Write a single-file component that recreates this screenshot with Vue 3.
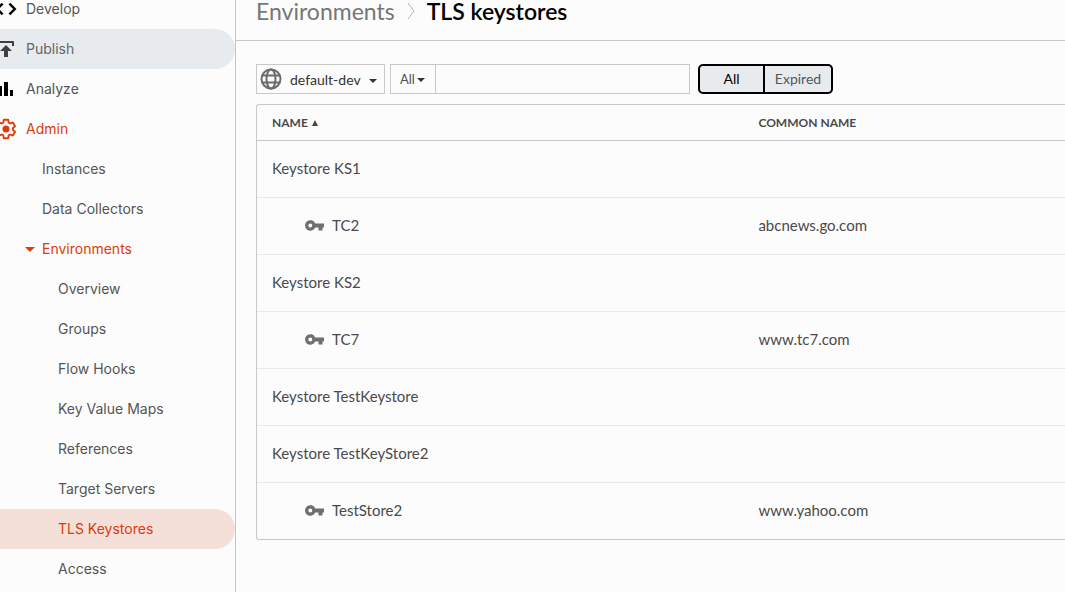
<script setup>
import { ref } from 'vue'

const sections = [
  { label: 'Develop', icon: 'code' },
  { label: 'Publish', icon: 'publish', state: 'hovered' },
  { label: 'Analyze', icon: 'chart' },
  { label: 'Admin', icon: 'gear', state: 'accent' },
  { label: 'Instances', level: 1 },
  { label: 'Data Collectors', level: 1 },
  { label: 'Environments', level: 1, state: 'accent', open: true },
  { label: 'Overview', level: 2 },
  { label: 'Groups', level: 2 },
  { label: 'Flow Hooks', level: 2 },
  { label: 'Key Value Maps', level: 2 },
  { label: 'References', level: 2 },
  { label: 'Target Servers', level: 2 },
  { label: 'TLS Keystores', level: 2, state: 'current' },
  { label: 'Access', level: 2 }
]

const rows = [
  { name: 'Keystore KS1' },
  { name: 'TC2', alias: true, common: 'abcnews.go.com' },
  { name: 'Keystore KS2' },
  { name: 'TC7', alias: true, common: 'www.tc7.com' },
  { name: 'Keystore TestKeystore' },
  { name: 'Keystore TestKeyStore2' },
  { name: 'TestStore2', alias: true, common: 'www.yahoo.com' }
]

const query = ref('')
const filter = ref('All')
</script>

<template>
  <div class="app">
    <nav class="sidebar" aria-label="Main">
      <ul class="menu">
        <li v-for="item in sections" :key="item.label">
          <a href="#" class="item" :class="[item.state, 'level-' + (item.level || 0)]">
            <svg v-if="item.icon" class="item-icon" viewBox="0 0 24 24" aria-hidden="true">
              <path v-if="item.icon === 'code'" d="M8.600 6.600 3.200 12l5.400 5.400M15.400 6.600l5.400 5.400-5.400 5.400" fill="none" stroke="#000" stroke-width="2.400" />
              <path v-else-if="item.icon === 'publish'" d="M4 9V5q0-1 1-1h14q1 0 1 1v4h-2V6H6v3zM12 8l6 6h-4v6h-4v-6H6z" fill="#3c4043" />
              <path v-else-if="item.icon === 'chart'" d="M4 9h4v10H4zM10 5h4v14h-4zM16 13h3v6h-3z" fill="#000" />
              <template v-else>
                <path d="M19.430 12.980c.04-.32.07-.64.07-.98s-.03-.66-.07-.98l2.110-1.650c.19-.15.24-.42.12-.64l-2-3.460c-.09-.16-.26-.25-.44-.25-.06 0-.12.01-.17.03l-2.490 1c-.52-.4-1.080-.73-1.690-.98l-.38-2.650C14.460 2.180 14.250 2 14 2h-4c-.25 0-.46.18-.49.42l-.38 2.650c-.61.25-1.170.59-1.690.98l-2.490-1c-.06-.02-.12-.03-.18-.03-.17 0-.34.09-.43.25l-2 3.460c-.13.22-.07.49.12.64l2.110 1.650c-.04.32-.07.65-.07.98s.03.66.07.98l-2.110 1.650c-.19.15-.24.42-.12.64l2 3.460c.09.16.26.25.44.25.06 0 .12-.01.17-.03l2.490-1c.52.4 1.080.73 1.690.98l.38 2.650c.03.24.24.42.49.42h4c.25 0 .46-.18.49-.42l.38-2.650c.61-.25 1.170-.59 1.690-.98l2.490 1c.06.02.12.03.18.03.17 0 .34-.09.43-.25l2-3.460c.12-.22.07-.49-.12-.64z" fill="none" stroke="#dd3b0a" stroke-width="2" transform="translate(.9 .9) scale(.925)" />
                <circle cx="12" cy="12" r="3.500" fill="#dd3b0a" />
              </template>
            </svg>
            <svg v-if="item.open" class="expander" viewBox="0 0 10 5" aria-hidden="true">
              <path d="M0 0h10L5 5z" fill="#dd3b0a" />
            </svg>
            <span class="label">{{ item.label }}</span>
          </a>
        </li>
      </ul>
    </nav>

    <main class="main">
      <header class="header">
        <a href="#" class="crumb">Environments</a>
        <svg class="chevron" viewBox="0 0 8 16" aria-hidden="true">
          <path d="M1 0l6 8-6 8" fill="none" stroke="#b5b5b5" stroke-width="1" />
        </svg>
        <h1 class="title">TLS keystores</h1>
      </header>

      <section class="content">
        <div class="toolbar">
          <div class="picker env">
            <svg class="globe" viewBox="0 0 22 22" aria-hidden="true">
              <g fill="none" stroke="#6b6b6b" stroke-width="2">
                <circle cx="11" cy="11" r="9.500" />
                <ellipse cx="11" cy="11" rx="4.500" ry="9.500" />
                <path d="M2 7.500h18M2 14.500h18" />
              </g>
            </svg>
            <select aria-label="Environment">
              <option>default-dev</option>
            </select>
            <svg class="caret" viewBox="0 0 8 4" aria-hidden="true"><path d="M0 0h8L4 4z" fill="#333" /></svg>
          </div>

          <div class="search">
            <div class="picker scope">
              <select aria-label="Search field">
                <option>All</option>
              </select>
              <svg class="caret" viewBox="0 0 8 4" aria-hidden="true"><path d="M0 0h8L4 4z" fill="#333" /></svg>
            </div>
            <input v-model="query" class="query" type="text" aria-label="Search keystores" />
          </div>

          <div class="toggle" role="group" aria-label="Filter">
            <button type="button" class="all" :aria-pressed="filter === 'All'" @click="filter = 'All'">All</button>
            <button type="button" class="expired" :aria-pressed="filter === 'Expired'" @click="filter = 'Expired'">Expired</button>
          </div>
        </div>

        <table class="table">
          <thead>
            <tr>
              <th scope="col" class="name-col" aria-sort="ascending">
                <span class="sort">NAME
                  <svg class="sort-icon" viewBox="0 0 6 6" aria-hidden="true"><path d="M3 0l3 6H0z" fill="#444" /></svg>
                </span>
              </th>
              <th scope="col">COMMON NAME</th>
            </tr>
          </thead>
          <tbody>
            <tr v-for="row in rows" :key="row.name">
              <td>
                <span v-if="row.alias" class="alias">
                  <svg class="key" viewBox="0 0 19 11" aria-hidden="true">
                    <path fill-rule="evenodd" d="M10.200 3.400H19v4.100h-1.500V10.500h-4V7.500h-3.300A5.300 5.300 0 1 1 10.200 3.400zM5.300 3.500a2 2 0 1 0 0 4 2 2 0 0 0 0-4z" fill="#6f6f6f" />
                  </svg>
                  {{ row.name }}
                </span>
                <template v-else>{{ row.name }}</template>
              </td>
              <td>{{ row.common }}</td>
            </tr>
          </tbody>
        </table>
      </section>
    </main>
  </div>
</template>

<style>
body {
  background: #fcfcfc;
}
</style>

<style scoped>
.app {
  display: flex;
  height: 100vh;
  overflow: hidden;
  background: #fcfcfc;
  color: #4a4a4a;
  font-family: Lato, "Open Sans", sans-serif;
  font-size: 15px;
}

.app * {
  box-sizing: border-box;
}

.sidebar {
  flex: 0 0 236px;
  overflow: hidden;
  border-right: 1px solid #c4c4c4;
  font-family: Inter, "Open Sans", sans-serif;
  font-size: 14px;
}

/* The menu rests slightly scrolled, so its first row is cut by the top edge. */
.menu {
  margin: -11px 0 0 -6px;
  padding: 0;
  list-style: none;
}

.item {
  display: flex;
  align-items: center;
  height: 40px;
  border-radius: 0 20px 20px 0;
  color: #555;
  text-decoration: none;
}

.item-icon {
  width: 24px;
  height: 24px;
  margin-right: 8px;
}

.label {
  padding-bottom: 2px;
}

.level-1 {
  padding-left: 48px;
}

.level-2 {
  padding-left: 64px;
}

.expander {
  width: 10px;
  height: 5px;
  margin-left: -17px;
  margin-right: 7px;
}

.hovered {
  background: #e8ebee;
  color: #666;
}

.accent {
  color: #dd3b0a;
}

.current {
  background: #f4e0d9;
  color: #dd3b0a;
}

.main {
  flex: 1;
  min-width: 0;
}

.header {
  display: flex;
  align-items: center;
  height: 41px;
  padding: 0 20px 18px;
  border-bottom: 1px solid #c9c9c9;
  font-size: 23px;
  line-height: 22px;
}

.crumb {
  color: #767676;
  text-decoration: none;
}

.chevron {
  width: 8px;
  height: 16px;
  margin: 0 12px;
}

.title {
  margin: 0;
  color: #000;
  font-size: 23px;
  font-weight: 600;
}

.content {
  padding: 23px 0 0 20px;
}

.toolbar {
  display: flex;
  height: 30px;
  margin-bottom: 10px;
}

.picker {
  position: relative;
  border: 1px solid #c9c9c9;
}

.picker select {
  display: block;
  width: 100%;
  height: 100%;
  margin: 0;
  padding: 0;
  border: 0;
  outline: 0;
  appearance: none;
  background: transparent;
  color: #333;
  font: inherit;
}

.env {
  width: 129px;
  margin-right: 5px;
  font-size: 14px;
}

.env select {
  padding-left: 33px;
}

.globe {
  position: absolute;
  top: 3px;
  left: 3px;
  width: 22px;
  height: 22px;
  pointer-events: none;
}

.caret {
  position: absolute;
  top: 14px;
  right: 7px;
  width: 8px;
  height: 4px;
  pointer-events: none;
}

.search {
  display: flex;
  flex: 0 1 300px;
  margin-right: 8px;
}

.scope {
  flex: 0 0 46px;
  font-size: 13px;
}

.scope select {
  padding-left: 9px;
  color: #505050;
}

.scope .caret {
  top: 13px;
  right: 10px;
}

.query {
  flex: 1;
  min-width: 0;
  border: 1px solid #c9c9c9;
  border-left: 0;
  border-radius: 0;
  outline: 0;
  padding: 0 8px;
  background: #fcfcfc;
  font: inherit;
}

.toggle {
  display: flex;
}

.toggle button {
  border: 2px solid #000;
  padding: 0 0 1px;
  background: #e8ebee;
  color: #555;
  font: inherit;
  font-size: 14px;
}

.toggle .all {
  width: 67px;
  border-radius: 5px 0 0 5px;
  color: #000;
}

.toggle .expired {
  width: 68px;
  border-left: 0;
  border-radius: 0 5px 5px 0;
}

.table {
  width: 100%;
  border: 1px solid #c9c9c9;
  border-right: 0;
  border-radius: 3px 0 0 3px;
  border-spacing: 0;
  table-layout: fixed;
}

.table th,
.table td {
  padding: 0 15px;
  text-align: left;
}

.table th {
  height: 36px;
  border-bottom: 1px solid #c9c9c9;
  font-size: 12px;
  font-weight: 700;
}

.name-col {
  width: 60.2%;
}

.sort {
  display: flex;
  align-items: center;
  gap: 4px;
}

.sort-icon {
  width: 6px;
  height: 6px;
}

.table td {
  height: 57px;
  padding-bottom: 2px;
  border-bottom: 1px solid #e8ebee;
}

.table tbody tr:last-child td {
  height: 56px;
  border-bottom: 0;
}

.alias {
  display: flex;
  align-items: center;
  gap: 8px;
  padding-left: 33px;
}

.key {
  width: 19px;
  height: 11px;
}
</style>
